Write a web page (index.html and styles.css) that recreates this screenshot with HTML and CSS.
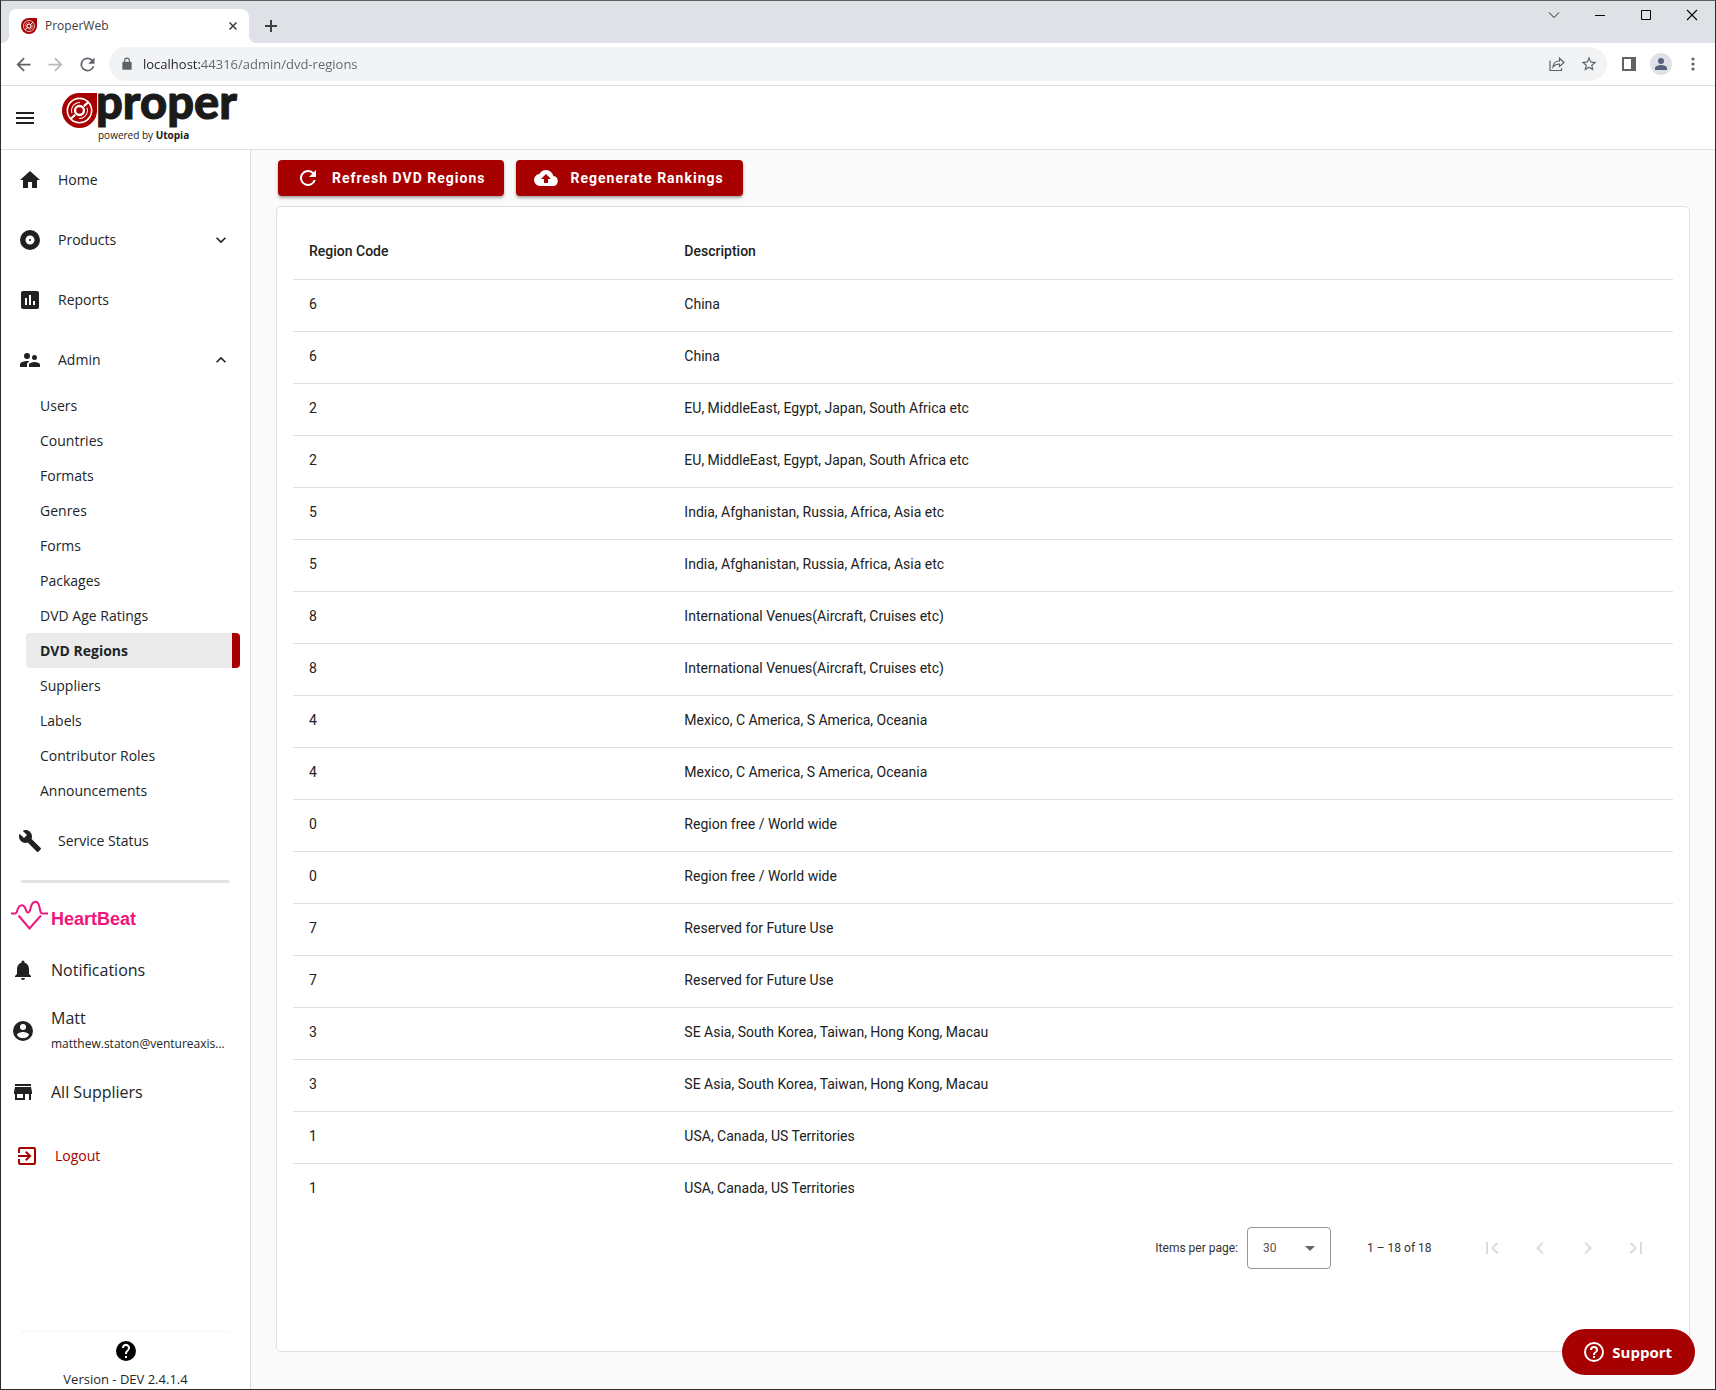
FILE: index.html
```html
<!DOCTYPE html>
<html lang="en">
<head>
<meta charset="utf-8">
<title>ProperWeb</title>
<link rel="stylesheet" href="styles.css">
</head>
<body>
<svg class="defs" aria-hidden="true">
  <symbol id="mark" viewBox="0 0 36 36">
    <path fill="#a60000" d="M18 0H36V18A18 18 0 1 1 18 0Z"/>
    <circle cx="18" cy="18" r="12.500" fill="none" stroke="#fff" stroke-width="1.600"/>
    <circle cx="18" cy="18" r="8.200" fill="none" stroke="#fff" stroke-width="1" stroke-dasharray="16 9.760" transform="rotate(-20 18 18)"/>
    <circle cx="18" cy="18" r="4.600" fill="none" stroke="#fff" stroke-width="2.400"/>
    <path stroke="#fff" stroke-width="2.200" fill="none" d="M22.500 13.500l4.500-4M13.500 22.500l-4.500 4"/>
  </symbol>
  <symbol id="refresh" viewBox="0 0 24 24"><path d="M17.650 6.350A8 8 0 1 0 19.730 14h-2.080A6 6 0 1 1 12 6c1.660 0 3.140.69 4.220 1.780L13 11h7V4z"/></symbol>
</svg>

<header class="browser">
  <div class="tabstrip">
    <div class="tab">
      <svg width="16" height="16"><use href="#mark"/></svg>
      <span class="tab-title">ProperWeb</span>
      <button class="plain tab-close" aria-label="Close tab"><svg width="16" height="16" viewBox="0 0 16 16"><path d="M4.500 4.500l7 7M11.500 4.500l-7 7" stroke="#3c4043" stroke-width="1.600"/></svg></button>
    </div>
    <button class="plain new-tab" aria-label="New tab"><svg width="16" height="16" viewBox="0 0 16 16"><path d="M8 2v12M2 8h12" stroke="#3c4043" stroke-width="2"/></svg></button>
    <div class="window-controls">
      <button class="plain" aria-label="Search tabs"><svg width="12" height="12" viewBox="0 0 12 12"><path d="M1 3.500l5 5 5-5" fill="none" stroke="#222"/></svg></button>
      <button class="plain" aria-label="Minimize"><svg width="12" height="12" viewBox="0 0 12 12"><path d="M1 6.500h10" stroke="#000"/></svg></button>
      <button class="plain" aria-label="Maximize"><svg width="12" height="12" viewBox="0 0 12 12"><path d="M1.500 1.500h9v9h-9z" fill="none" stroke="#000"/></svg></button>
      <button class="plain" aria-label="Close"><svg width="12" height="12" viewBox="0 0 12 12"><path d="M1 1l10 10M11 1L1 11" stroke="#000" stroke-width="1.100"/></svg></button>
    </div>
  </div>
  <div class="toolbar">
    <button class="plain tool" aria-label="Back"><svg width="21" height="21" viewBox="0 0 24 24" fill="#5f6368"><path d="M20 11H7.830l5.590-5.590L12 4l-8 8 8 8 1.410-1.410L7.830 13H20z"/></svg></button>
    <button class="plain tool" aria-label="Forward"><svg width="21" height="21" viewBox="0 0 24 24" fill="#bababa"><path d="M4 13h12.170l-5.590 5.590L12 20l8-8-8-8-1.410 1.410L16.170 11H4z"/></svg></button>
    <button class="plain tool" aria-label="Reload"><svg width="21" height="21" fill="#5f6368"><use href="#refresh"/></svg></button>
    <div class="address">
      <svg width="14" height="14" viewBox="0 0 24 24" fill="#5f6368"><path d="M18 8h-1V6A5 5 0 0 0 7 6v2H6a2 2 0 0 0-2 2v10a2 2 0 0 0 2 2h12a2 2 0 0 0 2-2V10a2 2 0 0 0-2-2zM9 6a3 3 0 0 1 6 0v2H9z"/></svg>
      <input class="url" type="text" aria-label="Address" value="localhost:44316/admin/dvd-regions">
      <button class="plain tool" aria-label="Share"><svg width="16" height="16" viewBox="0 0 16 16" fill="none" stroke="#5f6368" stroke-width="1.200"><path d="M1 4.500v10h11.500v-2.500M4 11c.3-4 2.600-6 6.500-6V2.200L15 6.500l-4.500 4V8C7.500 8 5.500 9 4 11z"/></svg></button>
      <button class="plain tool" aria-label="Bookmark"><svg width="18" height="18" viewBox="0 0 24 24" fill="#5f6368"><path d="M22 9.240l-7.190-.62L12 2 9.190 8.630 2 9.240l5.460 4.730L5.820 21 12 17.270 18.180 21l-1.630-7.030zM12 15.400l-3.760 2.270 1-4.280-3.320-2.880 4.380-.38L12 6.100l1.710 4.040 4.380.38-3.320 2.880 1 4.280z"/></svg></button>
    </div>
    <button class="plain tool" aria-label="Side panel"><svg width="14" height="14" viewBox="0 0 14 14"><path fill="#5f6368" fill-rule="evenodd" d="M0 0h14v14H0zM2 2v10h7V2z"/></svg></button>
    <button class="plain tool" aria-label="Profile"><svg width="22" height="22" viewBox="0 0 22 22"><circle cx="11" cy="11" r="11" fill="#dee1e6"/><circle cx="11" cy="8" r="3" fill="#55607a"/><path d="M5 16v-1c0-2 4-3 6-3s6 1 6 3v2H5z" fill="#55607a"/></svg></button>
    <button class="plain tool" aria-label="Menu"><svg width="16" height="16" viewBox="0 0 16 16" fill="#5f6368"><circle cx="8" cy="3" r="1.600"/><circle cx="8" cy="8" r="1.600"/><circle cx="8" cy="13" r="1.600"/></svg></button>
  </div>
</header>

<div class="appbar">
  <button class="plain menu" aria-label="Toggle menu"><svg width="18" height="12" viewBox="0 0 18 12"><path fill="#212121" d="M0 0h18v2H0zM0 5h18v2H0zM0 10h18v2H0z"/></svg></button>
  <svg class="logo" width="180" height="58" viewBox="0 0 180 58" role="img" aria-label="proper powered by Utopia">
    <use href="#mark" x="2" y="4" width="35" height="35"/>
    <text class="logo-name" x="36" y="30">proper</text>
    <text class="logo-sub" x="38" y="50">powered by <tspan class="strong">Utopia</tspan></text>
  </svg>
</div>

<div class="shell">
  <aside class="sidebar">
    <nav>
      <a class="nav-item" href="#"><svg width="24" height="24" viewBox="0 0 24 24"><path d="M10 20v-6h4v6h5v-8h3L12 3 2 12h3v8z"/></svg>Home</a>
      <a class="nav-item" href="#"><svg width="24" height="24" viewBox="0 0 24 24"><path d="M12 2a10 10 0 1 0 0 20 10 10 0 0 0 0-20zm0 14.500a4.500 4.500 0 1 1 0-9 4.500 4.500 0 0 1 0 9zM12 11a1 1 0 1 0 0 2 1 1 0 0 0 0-2z"/></svg>Products<svg class="chevron" width="20" height="20" viewBox="0 0 24 24"><path d="M7.410 8.590L12 13.170l4.590-4.580L18 10l-6 6-6-6z"/></svg></a>
      <a class="nav-item" href="#"><svg width="24" height="24" viewBox="0 0 24 24"><path d="M19 3H5a2 2 0 0 0-2 2v14a2 2 0 0 0 2 2h14a2 2 0 0 0 2-2V5a2 2 0 0 0-2-2zM9 17H7v-7h2zm4 0h-2V7h2zm4 0h-2v-4h2z"/></svg>Reports</a>
      <a class="nav-item" href="#"><svg width="24" height="24" viewBox="0 0 24 24"><path d="M16.500 12a2.500 2.500 0 1 0 0-5 2.500 2.500 0 0 0 0 5zM9 11a3 3 0 1 0 0-6 3 3 0 0 0 0 6zm7.500 3c-1.830 0-5.500.92-5.500 2.750V19h11v-2.250c0-1.830-3.670-2.750-5.500-2.750zM9 13c-2.330 0-7 1.170-7 3.500V19h7v-2.250c0-.85.33-2.340 2.370-3.470C10.500 13.100 9.660 13 9 13z"/></svg>Admin<svg class="chevron" width="20" height="20" viewBox="0 0 24 24"><path d="M7.410 15.410L12 10.830l4.590 4.580L18 14l-6-6-6 6z"/></svg></a>
      <ul class="subnav">
        <li><a href="#">Users</a></li>
        <li><a href="#">Countries</a></li>
        <li><a href="#">Formats</a></li>
        <li><a href="#">Genres</a></li>
        <li><a href="#">Forms</a></li>
        <li><a href="#">Packages</a></li>
        <li><a href="#">DVD Age Ratings</a></li>
        <li><a class="active" href="#" aria-current="page">DVD Regions</a></li>
        <li><a href="#">Suppliers</a></li>
        <li><a href="#">Labels</a></li>
        <li><a href="#">Contributor Roles</a></li>
        <li><a href="#">Announcements</a></li>
      </ul>
      <a class="nav-item" href="#"><svg width="24" height="24" viewBox="0 0 24 24"><path d="M22.700 19l-9.100-9.100c.9-2.300.4-5-1.500-6.900-2-2-5-2.400-7.400-1.300L9 6 6 9 1.600 4.700C.4 7.100.9 10.100 2.900 12.100c1.900 1.900 4.600 2.400 6.900 1.500l9.100 9.100c.4.400 1 .4 1.400 0l2.300-2.300c.5-.4.5-1.100.1-1.400z"/></svg>Service Status</a>
    </nav>
    <hr class="divider">
    <div class="heartbeat">
      <svg width="37" height="30" viewBox="0 0 37 30" fill="none" stroke="#f0147d" stroke-width="2"><path d="M0 13.500h4c2 0 2-2 3-5s5-5 7-1 1 5 3 5 2-2 3-6 6-8 8-1 1 8 4 8h5M7.500 15.500l11 13 11.500-13"/></svg>
      <span>HeartBeat</span>
    </div>
    <a class="account" href="#"><svg width="24" height="24" viewBox="0 0 24 24"><path d="M12 22a2 2 0 0 0 2-2h-4a2 2 0 0 0 2 2zm6-6v-5c0-3.070-1.640-5.640-4.500-6.320V4a1.500 1.500 0 0 0-3 0v.68C7.630 5.360 6 7.920 6 11v5l-2 2v1h16v-1z"/></svg>Notifications</a>
    <a class="account user" href="#"><svg width="24" height="24" viewBox="0 0 24 24"><path fill-rule="evenodd" d="M12 2a10 10 0 1 0 0 20 10 10 0 0 0 0-20zm0 3a3 3 0 1 1 0 6 3 3 0 0 1 0-6zm0 14.200A7.200 7.200 0 0 1 6 15.980c.03-1.990 4-3.080 6-3.080s5.970 1.090 6 3.080a7.200 7.200 0 0 1-6 3.220z"/></svg><span class="who"><span>Matt</span><span class="email">matthew.staton@ventureaxis...</span></span></a>
    <a class="account" href="#"><svg width="24" height="24" viewBox="0 0 24 24"><path d="M20 4H4v2h16zm1 10v-2l-1-5H4l-1 5v2h1v6h10v-6h4v6h2v-6zm-9 4H6v-4h6z"/></svg>All Suppliers</a>
    <a class="logout" href="#"><svg width="24" height="24" viewBox="0 0 24 24"><path d="M10.090 15.590L11.500 17l5-5-5-5-1.410 1.410L12.670 11H3v2h9.670zM19 3H5a2 2 0 0 0-2 2v4h2V5h14v14H5v-4H3v4a2 2 0 0 0 2 2h14a2 2 0 0 0 2-2V5a2 2 0 0 0-2-2z"/></svg>Logout</a>
    <footer class="side-foot">
      <svg width="24" height="24" viewBox="0 0 24 24"><path d="M12 2a10 10 0 1 0 0 20 10 10 0 0 0 0-20zm1 17h-2v-2h2zm2.070-7.750l-.9.920C13.450 12.900 13 13.500 13 15h-2v-.5c0-1.100.45-2.100 1.170-2.830l1.240-1.260A2 2 0 1 0 10 9H8a4 4 0 1 1 7.070 2.250z"/></svg>
      <span>Version - DEV 2.4.1.4</span>
    </footer>
  </aside>

  <main class="main">
    <div class="actions">
      <button class="action"><svg width="24" height="24"><use href="#refresh"/></svg>Refresh DVD Regions</button>
      <button class="action"><svg width="24" height="24" viewBox="0 0 24 24"><path d="M19.350 10.040A7.490 7.490 0 0 0 12 4C9.110 4 6.600 5.640 5.350 8.040A5.990 5.990 0 0 0 0 14a6 6 0 0 0 6 6h13a5 5 0 0 0 .35-9.960zM14 13v4h-4v-4H7l5-5 5 5z"/></svg>Regenerate Rankings</button>
    </div>
    <section class="card">
      <table>
        <thead><tr><th scope="col" class="code">Region Code</th><th scope="col">Description</th></tr></thead>
        <tbody>
          <tr><td>6</td><td>China</td></tr>
          <tr><td>6</td><td>China</td></tr>
          <tr><td>2</td><td>EU, MiddleEast, Egypt, Japan, South Africa etc</td></tr>
          <tr><td>2</td><td>EU, MiddleEast, Egypt, Japan, South Africa etc</td></tr>
          <tr><td>5</td><td>India, Afghanistan, Russia, Africa, Asia etc</td></tr>
          <tr><td>5</td><td>India, Afghanistan, Russia, Africa, Asia etc</td></tr>
          <tr><td>8</td><td>International Venues(Aircraft, Cruises etc)</td></tr>
          <tr><td>8</td><td>International Venues(Aircraft, Cruises etc)</td></tr>
          <tr><td>4</td><td>Mexico, C America, S America, Oceania</td></tr>
          <tr><td>4</td><td>Mexico, C America, S America, Oceania</td></tr>
          <tr><td>0</td><td>Region free / World wide</td></tr>
          <tr><td>0</td><td>Region free / World wide</td></tr>
          <tr><td>7</td><td>Reserved for Future Use</td></tr>
          <tr><td>7</td><td>Reserved for Future Use</td></tr>
          <tr><td>3</td><td>SE Asia, South Korea, Taiwan, Hong Kong, Macau</td></tr>
          <tr><td>3</td><td>SE Asia, South Korea, Taiwan, Hong Kong, Macau</td></tr>
          <tr><td>1</td><td>USA, Canada, US Territories</td></tr>
          <tr><td>1</td><td>USA, Canada, US Territories</td></tr>
        </tbody>
      </table>
      <div class="paginator">
        <label for="page-size">Items per page:</label>
        <select id="page-size"><option>10</option><option selected>30</option><option>50</option></select>
        <span class="range">1 – 18 of 18</span>
        <div class="pages">
          <button class="plain page" disabled aria-label="First page"><svg width="24" height="24" viewBox="0 0 24 24"><path d="M18.410 16.590L13.820 12l4.590-4.590L17 6l-6 6 6 6zM6 6h2v12H6z"/></svg></button>
          <button class="plain page" disabled aria-label="Previous page"><svg width="24" height="24" viewBox="0 0 24 24"><path d="M15.410 7.410L14 6l-6 6 6 6 1.410-1.410L10.830 12z"/></svg></button>
          <button class="plain page" disabled aria-label="Next page"><svg width="24" height="24" viewBox="0 0 24 24"><path d="M10 6L8.590 7.410 13.170 12l-4.580 4.590L10 18l6-6z"/></svg></button>
          <button class="plain page" disabled aria-label="Last page"><svg width="24" height="24" viewBox="0 0 24 24"><path d="M5.590 7.410L10.180 12l-4.590 4.590L7 18l6-6-6-6zM16 6h2v12h-2z"/></svg></button>
        </div>
      </div>
    </section>
  </main>
</div>
<button class="support"><svg width="24" height="24" viewBox="0 0 24 24"><path d="M11 18h2v-2h-2zm1-16a10 10 0 1 0 0 20 10 10 0 0 0 0-20zm0 18a8 8 0 1 1 0-16 8 8 0 0 1 0 16zm0-14a4 4 0 0 0-4 4h2a2 2 0 1 1 4 0c0 2-3 1.750-3 5h2c0-2.250 3-2.500 3-5a4 4 0 0 0-4-4z"/></svg>Support</button>
</body>
</html>
```
FILE: styles.css
```css
* { box-sizing: border-box; }

body {
  margin: 0;
  min-height: 100vh;
  display: flex;
  flex-direction: column;
  border: 1px solid #2b2b2d;
  border-top-color: #606063;
  background: #fff;
  color: #212529;
  font: 14px/20px "Open Sans", "Noto Sans", sans-serif;
}

svg { flex: none; display: block; }
.defs { position: absolute; width: 0; height: 0; }
a { color: inherit; text-decoration: none; }

.plain {
  display: flex;
  align-items: center;
  justify-content: center;
  border: 0;
  padding: 0;
  background: none;
}

/* Browser chrome */
.tabstrip {
  display: flex;
  height: 42px;
  padding-left: 8px;
  background: #dee1e6;
}
.tab {
  position: relative;
  display: flex;
  align-items: center;
  gap: 8px;
  width: 240px;
  height: 34px;
  margin-top: 8px;
  padding: 0 8px 0 12px;
  border-radius: 8px 8px 0 0;
  background: #fff;
  font-size: 12px;
  color: #3c4043;
}
.tab::before,
.tab::after {
  content: "";
  position: absolute;
  bottom: 0;
  width: 8px;
  height: 8px;
}
.tab::before { right: 100%; background: radial-gradient(circle at 0 0, #dee1e6 8px, #fff 8px); }
.tab::after { left: 100%; background: radial-gradient(circle at 100% 0, #dee1e6 8px, #fff 8px); }
.tab-title { flex: 1; }
.new-tab { width: 28px; margin: 8px 0 0 8px; }
.window-controls { display: flex; height: 28px; margin-left: auto; }
.window-controls .plain { width: 46px; }

.toolbar {
  display: flex;
  align-items: center;
  height: 43px;
  padding: 0 6px;
  border-bottom: 1px solid #dadce0;
}
.tool { width: 32px; height: 32px; }
.address {
  flex: 1;
  display: flex;
  align-items: center;
  height: 34px;
  margin: 0 6px;
  padding: 0 2px 0 11px;
  border-radius: 17px;
  background: #f1f3f4;
}
.url {
  flex: 1;
  border: 0;
  padding: 0;
  margin-left: 9px;
  font: 13px/20px "Open Sans", sans-serif;
  color: transparent;
  background: linear-gradient(to right, #202124 58px, #5f6368 58px);
  background-clip: text;
  -webkit-background-clip: text;
}

/* Application bar */
.appbar {
  display: flex;
  align-items: center;
  gap: 26px;
  height: 64px;
  padding-left: 15px;
  border-bottom: 1px solid #e0e0e0;
}
.logo { overflow: visible; }
.logo-name {
  font: 900 47px "Lato", sans-serif;
  fill: #1a1a1a;
  stroke: #1a1a1a;
  stroke-width: 1px;
}
.logo-sub { font: 10px "Open Sans", sans-serif; fill: #1a1a1a; }
.strong { font-weight: 700; }

/* Sidebar */
.shell { flex: 1; display: flex; }
.sidebar {
  flex: none;
  display: flex;
  flex-direction: column;
  width: 250px;
  border-right: 1px solid #dcdcdc;
  fill: #212121;
}
.nav-item {
  display: flex;
  align-items: center;
  gap: 16px;
  height: 60px;
  padding: 0 19px 0 17px;
}
.chevron { margin-left: auto; }
.subnav {
  list-style: none;
  margin: -2px 10px 3px 25px;
  padding: 0;
}
.subnav a {
  display: block;
  padding-left: 14px;
  line-height: 35px;
}
.subnav .active {
  border-radius: 4px;
  border-right: 8px solid #a60000;
  background: #ebebeb;
  font-weight: 700;
}
.divider {
  width: 209px;
  height: 3px;
  margin: 9px 20px 0;
  border: 0;
  border-radius: 2px;
  background: #e4e4e4;
}
.heartbeat {
  display: flex;
  align-items: center;
  gap: 3px;
  height: 64px;
  padding-left: 10px;
  color: #f0147d;
  font: bold 18px/24px "Liberation Sans", Arial, sans-serif;
}
.heartbeat span { padding-top: 8px; }
.account {
  display: flex;
  align-items: center;
  gap: 16px;
  height: 46px;
  padding: 0 20px 0 10px;
  font-size: 16px;
}
.user { height: 76px; }
.who {
  display: flex;
  flex-direction: column;
  line-height: 26px;
}
.email {
  white-space: nowrap;
  font-size: 12px;
}
.logout {
  display: flex;
  align-items: center;
  gap: 16px;
  margin-top: 17px;
  height: 48px;
  padding-left: 14px;
  color: #a60000;
  fill: #a60000;
}
.side-foot {
  display: flex;
  flex-direction: column;
  align-items: center;
  gap: 6px;
  margin: auto 20px 0;
  padding-top: 6px;
  border-top: 3px solid #fafafa;
  font-size: 13px;
  fill: #000;
}

/* Content */
.main {
  flex: 1;
  display: flex;
  flex-direction: column;
  gap: 10px;
  padding: 10px 25px 37px;
  background: #fafafa;
  font-family: Roboto, sans-serif;
}
.actions { display: flex; gap: 12px; padding-left: 2px; }
.action {
  display: flex;
  align-items: center;
  gap: 12px;
  height: 36px;
  padding: 0 19px 0 18px;
  border: 0;
  border-radius: 4px;
  background: #a60000;
  color: #fff;
  fill: #fff;
  font: 700 14px/20px Roboto, sans-serif;
  letter-spacing: 1px;
  box-shadow: 0 2px 3px rgba(0, 0, 0, .35);
}
.card {
  flex: 1;
  padding: 16px;
  border: 1px solid #dfdfdf;
  border-radius: 5px;
  background: #fff;
}
table { width: 100%; border-collapse: collapse; }
th, td {
  height: 52px;
  padding: 0 16px 2px;
  border-bottom: 1px solid #e0e0e0;
  text-align: left;
  color: #212121;
}
th { height: 56px; padding-bottom: 0; font-weight: 500; }
.code { width: 27.2%; }
tbody tr:last-child td { border-bottom: 0; }

.paginator {
  display: flex;
  align-items: center;
  justify-content: flex-end;
  height: 66px;
  padding-right: 13px;
  font-size: 12px;
  color: #333;
}
select {
  appearance: none;
  width: 84px;
  height: 42px;
  margin: 0 36px 0 9px;
  padding: 0 15px;
  border: 1px solid #949494;
  border-radius: 4px;
  background: #fff url("data:image/svg+xml,%3Csvg xmlns='http://www.w3.org/2000/svg' width='10' height='5'%3E%3Cpath fill='%23666' d='M0 0h10L5 5z'/%3E%3C/svg%3E") no-repeat right 15px center;
  color: #555;
  font: 12px/20px Roboto, sans-serif;
}
.range { min-width: 68px; margin-right: 33px; }
.pages { display: flex; }
.page { width: 48px; height: 48px; fill: #dcdcdc; }

.support {
  position: fixed;
  right: 21px;
  bottom: 15px;
  display: flex;
  align-items: center;
  gap: 6px;
  height: 46px;
  padding: 0 23px 0 20px;
  border: 0;
  border-radius: 23px;
  background: #a60000;
  color: #fff;
  fill: #fff;
  font: 700 15px/20px "Open Sans", sans-serif;
}
```
